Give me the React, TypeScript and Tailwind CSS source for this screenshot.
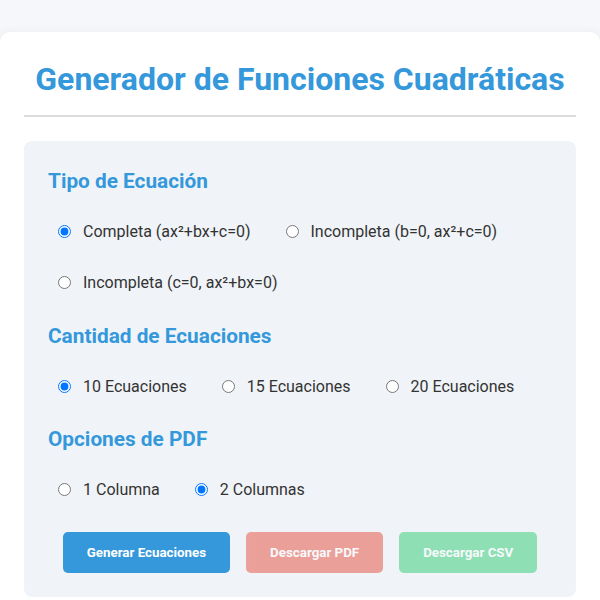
import React, { useState } from "react";

function Radio({ name, label, checked, onChange }: { name: string; label: string; checked: boolean; onChange: () => void }) {
  return (
    <label className="flex items-center gap-3 px-[10px] py-[10px] text-[16px] leading-[19px] text-[#333] cursor-pointer">
      <input type="radio" name={name} checked={checked} onChange={onChange} className="m-0 w-[13px] h-[13px]" />
      <span>{label}</span>
    </label>
  );
}

export default function App() {
  const [tipo, setTipo] = useState("completa");
  const [cant, setCant] = useState("10");
  const [cols, setCols] = useState("2");
  return (
    <div className="min-h-screen bg-[#f5f7fa] pt-8 font-['Roboto',sans-serif]">
      <div className="bg-white rounded-[10px] px-6 pt-[29px] pb-6 shadow-[0_0_10px_rgba(0,0,0,0.05)]">
        <h1 className="text-center text-[32px] leading-[37px] font-bold text-[#3498db] pb-[17px] border-b-2 border-[#ddd]">
          Generador de Funciones Cuadráticas
        </h1>
        <div className="mt-6 bg-[#f0f4f8] rounded-lg px-6 pt-[28px] pb-6">
          <h2 className="text-[20.8px] leading-[24px] font-bold text-[#3498db]">Tipo de Ecuación</h2>
          <div className="mt-[19px] flex flex-wrap gap-x-[15px] gap-y-[12px]">
            <Radio name="tipo" label="Completa (ax²+bx+c=0)" checked={tipo === "completa"} onChange={() => setTipo("completa")} />
            <Radio name="tipo" label="Incompleta (b=0, ax²+c=0)" checked={tipo === "b0"} onChange={() => setTipo("b0")} />
            <Radio name="tipo" label="Incompleta (c=0, ax²+bx=0)" checked={tipo === "c0"} onChange={() => setTipo("c0")} />
          </div>
          <h2 className="mt-[22px] text-[20.8px] leading-[24px] font-bold text-[#3498db]">Cantidad de Ecuaciones</h2>
          <div className="mt-[19px] flex flex-wrap gap-x-[15px] gap-y-[12px]">
            <Radio name="cant" label="10 Ecuaciones" checked={cant === "10"} onChange={() => setCant("10")} />
            <Radio name="cant" label="15 Ecuaciones" checked={cant === "15"} onChange={() => setCant("15")} />
            <Radio name="cant" label="20 Ecuaciones" checked={cant === "20"} onChange={() => setCant("20")} />
          </div>
          <h2 className="mt-[21px] text-[20.8px] leading-[24px] font-bold text-[#3498db]">Opciones de PDF</h2>
          <div className="mt-[19px] flex flex-wrap gap-x-[15px] gap-y-[12px]">
            <Radio name="cols" label="1 Columna" checked={cols === "1"} onChange={() => setCols("1")} />
            <Radio name="cols" label="2 Columnas" checked={cols === "2"} onChange={() => setCols("2")} />
          </div>
          <div className="mt-[23px] flex justify-center gap-4">
            <button className="bg-[#3498db] text-white text-[13.333px] leading-[17px] font-bold px-6 py-3 rounded-[5px]">
              Generar Ecuaciones
            </button>
            <button disabled className="bg-[#e74c3c] text-white text-[13.333px] leading-[17px] font-bold px-6 py-3 rounded-[5px] opacity-50">
              Descargar PDF
            </button>
            <button disabled className="bg-[#2ecc71] text-white text-[13.333px] leading-[17px] font-bold px-6 py-3 rounded-[5px] opacity-50">
              Descargar CSV
            </button>
          </div>
        </div>
      </div>
    </div>
  );
}
